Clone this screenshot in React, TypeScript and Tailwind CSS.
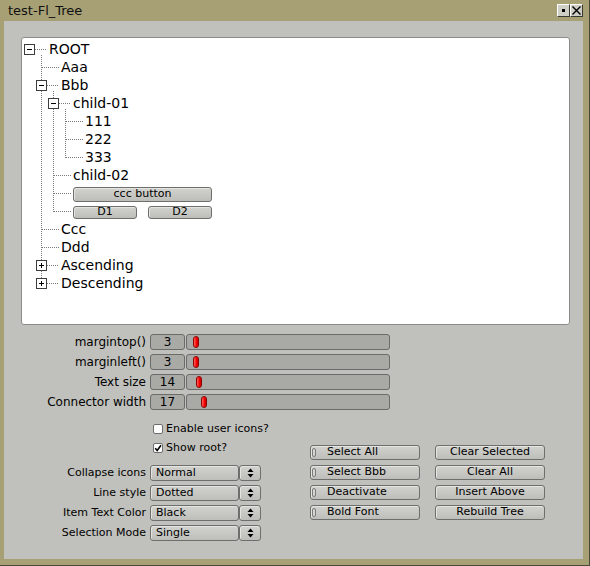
import React from 'react';

type Row = { level: number; label?: string; box?: '-' | '+'; widget?: 'ccc' | 'd' };

const rows: Row[] = [
  { level: 0, label: 'ROOT', box: '-' },
  { level: 1, label: 'Aaa' },
  { level: 1, label: 'Bbb', box: '-' },
  { level: 2, label: 'child-01', box: '-' },
  { level: 3, label: '111' },
  { level: 3, label: '222' },
  { level: 3, label: '333' },
  { level: 2, label: 'child-02' },
  { level: 2, widget: 'ccc' },
  { level: 2, widget: 'd' },
  { level: 1, label: 'Ccc' },
  { level: 1, label: 'Ddd' },
  { level: 1, label: 'Ascending', box: '+' },
  { level: 1, label: 'Descending', box: '+' },
];

const indent = ['pl-[27px]', 'pl-[39px]', 'pl-[51px]', 'pl-[63px]'];

const btn =
  'rounded-[3px] border border-[#6e6e6c] bg-gradient-to-b from-[#d2d2ce] to-[#bdbdb9] shadow-[inset_1px_1px_0_#e4e4e0]';

const TreeLines = () => {
  const dotted = { stroke: '#7a7a7a', strokeDasharray: '1 1' };
  return (
    <svg className="absolute left-0 top-0" width="547" height="286" shapeRendering="crispEdges">
      <line x1="19.5" y1="17" x2="19.5" y2="245.5" {...dotted} />
      <line x1="31.5" y1="53" x2="31.5" y2="173.5" {...dotted} />
      <line x1="43.5" y1="71" x2="43.5" y2="119.5" {...dotted} />
      {rows.map((r, i) => {
        const y = 11.5 + 18 * i;
        const L = r.level;
        const x1 = r.box ? 13 + 12 * L : 7.5 + 12 * L;
        const x2 = 25 + 12 * L;
        return <line key={`h${i}`} x1={x1} y1={y} x2={x2} y2={y} {...dotted} />;
      })}
      {rows.map((r, i) => {
        if (!r.box) return null;
        const L = r.level;
        const bx = 2 + 12 * L;
        const by = 6 + 18 * i;
        return (
          <g key={`b${i}`}>
            <rect x={bx + 0.5} y={by + 0.5} width="10" height="10" fill="#fff" stroke="#3c3c3c" />
            <line x1={bx + 3} y1={by + 5.5} x2={bx + 8} y2={by + 5.5} stroke="#000" />
            {r.box === '+' && <line x1={bx + 5.5} y1={by + 3} x2={bx + 5.5} y2={by + 8} stroke="#000" />}
          </g>
        );
      })}
    </svg>
  );
};

const Tree = () => (
  <div className="relative ml-[17px] mt-[16px] h-[288px] w-[549px] rounded-[3px] border border-[#8c8c8a] bg-white">
    <TreeLines />
    <div className="relative flex flex-col pt-[2px]">
      {rows.map((r, i) => (
        <div key={i} className={`flex h-[18px] items-center ${indent[r.level]}`}>
          {r.label && <span className="text-[14px] leading-[18px]">{r.label}</span>}
          {r.widget === 'ccc' && (
            <div className={`mt-[2px] flex h-[15px] w-[139px] items-center justify-center text-[11px] ${btn}`}>ccc button</div>
          )}
          {r.widget === 'd' && (
            <div className="mt-[2px] flex gap-[11px]">
              <div className={`flex h-[13px] w-[64px] items-center justify-center text-[11px] ${btn}`}>D1</div>
              <div className={`flex h-[13px] w-[64px] items-center justify-center text-[11px] ${btn}`}>D2</div>
            </div>
          )}
        </div>
      ))}
    </div>
  </div>
);

const sliders = [
  { label: 'margintop()', value: '3', left: 'left-[6px]' },
  { label: 'marginleft()', value: '3', left: 'left-[6px]' },
  { label: 'Text size', value: '14', left: 'left-[9px]' },
  { label: 'Connector width', value: '17', left: 'left-[14px]' },
];

const SliderRow = ({ label, value, left }: { label: string; value: string; left: string }) => (
  <div className="flex h-[16px] items-center">
    <div className="w-[142px] text-right text-[12px]">{label}</div>
    <div className="ml-[4px] flex h-full w-[35px] items-center justify-center rounded-[3px] border border-[#6b6b69] bg-[#a9a9a5] text-[12px]">
      {value}
    </div>
    <div className="relative ml-[1px] h-full w-[204px] rounded-[3px] border border-[#6b6b69] bg-[#a9a9a5]">
      <div
        className={`absolute top-[1px] h-[12px] w-[6px] rounded-[3px] border border-[#8a0000] bg-gradient-to-r from-[#ff5a5a] via-[#ff0000] to-[#d00000] ${left}`}
      />
    </div>
  </div>
);

const Check = ({ label, checked }: { label: string; checked?: boolean }) => (
  <div className="flex h-[12px] items-center">
    <div className="flex h-[10px] w-[10px] items-center justify-center rounded-[2px] border border-[#6e6e6c] bg-white">
      {checked && (
        <svg width="8" height="8" viewBox="0 0 8 8">
          <path d="M1.2 4.2 L3.2 6.5 L7 1.2" fill="none" stroke="#000" strokeWidth="1.6" />
        </svg>
      )}
    </div>
    <span className="ml-[3px] text-[11px]">{label}</span>
  </div>
);

const choices = [
  { label: 'Collapse icons', value: 'Normal' },
  { label: 'Line style', value: 'Dotted' },
  { label: 'Item Text Color', value: 'Black' },
  { label: 'Selection Mode', value: 'Single' },
];

const Choice = ({ label, value }: { label: string; value: string }) => (
  <div className="flex h-[16px] items-center">
    <div className="w-[142px] text-right text-[11px]">{label}</div>
    <div className="ml-[4px] flex h-full">
      <div className={`flex h-full w-[89px] items-center pl-[5px] text-[11px] ${btn}`}>{value}</div>
      <div className={`flex h-full w-[22px] items-center justify-center ${btn}`}>
        <svg width="7" height="10" viewBox="0 0 7 10">
          <path d="M3.5 0.5 L6.5 4 L0.5 4 Z" fill="#000" />
          <path d="M0.5 6 L6.5 6 L3.5 9.5 Z" fill="#000" />
        </svg>
      </div>
    </div>
  </div>
);

const lightButtons = ['Select All', 'Select Bbb', 'Deactivate', 'Bold Font'];
const plainButtons = ['Clear Selected', 'Clear All', 'Insert Above', 'Rebuild Tree'];

const LightButton = ({ label }: { label: string }) => (
  <div className={`flex h-[15px] w-[110px] items-center text-[11px] ${btn}`}>
    <div className="ml-[1px] h-[9px] w-[4px] rounded-[2px] border border-[#7a7a78] bg-[#d6d6d2]" />
    <span className="ml-[11px]">{label}</span>
  </div>
);

const PlainButton = ({ label }: { label: string }) => (
  <div className={`flex h-[15px] w-[110px] items-center justify-center text-[11px] ${btn}`}>{label}</div>
);

const WinButton = ({ children }: { children: React.ReactNode }) => (
  <div className="flex h-[13px] w-[13px] items-center justify-center border border-b-[#3a3a30] border-l-[#ffffff] border-r-[#3a3a30] border-t-[#ffffff] bg-[#cfcfc6]">
    {children}
  </div>
);

export default function App() {
  return (
    <div className="flex h-[566px] w-[590px] flex-col border-b border-r border-[#4a4838] bg-[#a6a074] font-['DejaVu_Sans',sans-serif] text-black">
      <div className="flex h-[21px] items-center justify-between pl-[8px] pr-[6px]">
        <span className="text-[13px] leading-none text-[#111]">test-Fl_Tree</span>
        <div className="flex">
          <WinButton>
            <div className="h-[3px] w-[3px] bg-black" />
          </WinButton>
          <WinButton>
            <svg width="9" height="9" viewBox="0 0 9 9">
              <path d="M0.5 0.5 L8.5 8.5 M8.5 0.5 L0.5 8.5" stroke="#000" strokeWidth="1.4" />
            </svg>
          </WinButton>
        </div>
      </div>
      <div className="ml-[4px] flex h-[538px] w-[579px] flex-col bg-[#c0c1bc]">
        <Tree />
        <div className="mt-[9px] flex flex-col gap-[4px]">
          {sliders.map((s) => (
            <SliderRow key={s.label} {...s} />
          ))}
        </div>
        <div className="flex items-start">
          <div className="flex w-[306px] flex-col">
            <div className="mt-[13px] flex flex-col gap-[7px] pl-[149px]">
              <Check label="Enable user icons?" />
              <Check label="Show root?" checked />
            </div>
            <div className="mt-[11px] flex flex-col gap-[4px]">
              {choices.map((c) => (
                <Choice key={c.label} {...c} />
              ))}
            </div>
          </div>
          <div className="mt-[35px] grid grid-cols-[110px_110px] gap-x-[15px] gap-y-[5px]">
            {lightButtons.map((b, i) => (
              <React.Fragment key={b}>
                <LightButton label={b} />
                <PlainButton label={plainButtons[i]} />
              </React.Fragment>
            ))}
          </div>
        </div>
      </div>
    </div>
  );
}
